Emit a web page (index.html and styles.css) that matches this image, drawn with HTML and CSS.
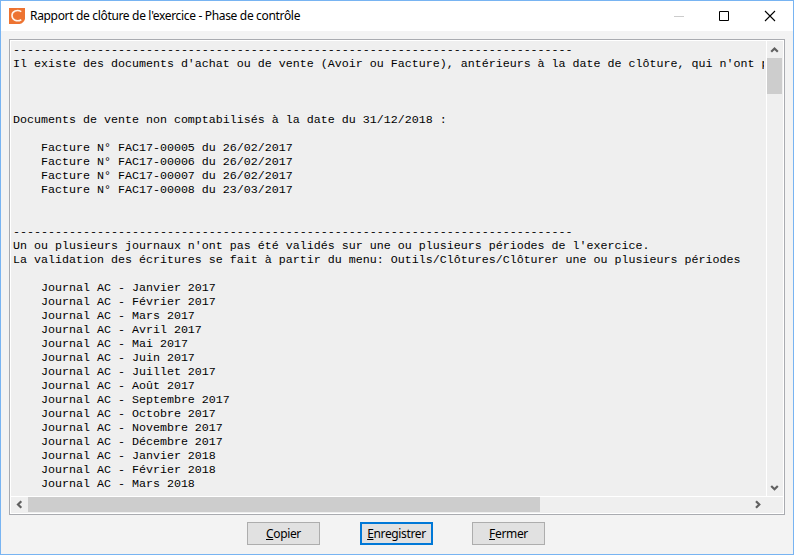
FILE: index.html
```html
<!DOCTYPE html>
<html lang="fr">
<head>
<meta charset="utf-8">
<title>Rapport de clôture de l'exercice - Phase de contrôle</title>
<link rel="stylesheet" href="styles.css">
</head>
<body>
<div class="window">
  <header class="titlebar">
    <svg class="app-icon" width="16" height="16" viewBox="0 0 16 16"><path d="M0 0H16V11Q15.5 13 14 14.2Q12.500 16 10.500 16H0Z" fill="#ed7331"/><path d="M12.300 3.600C8 1.100 3 3.200 3 7.500C3 12 8 14.200 12.300 11.700" fill="none" stroke="#fff3e9" stroke-width="1.600"/></svg>
    <h1 class="title">Rapport de clôture de l'exercice - Phase de contrôle</h1>
    <div class="controls">
      <svg width="46" height="29" viewBox="0 0 46 29"><path d="M18 14.5H28" stroke="#ccc"/></svg>
      <svg width="46" height="29" viewBox="0 0 46 29"><path d="M17.5 9.5H26.5V18.5H17.5Z" fill="none" stroke="#000"/></svg>
      <svg width="46" height="29" viewBox="0 0 46 29"><path d="M17 9L27 19M27 9L17 19" stroke="#000" stroke-width="1.1"/></svg>
    </div>
  </header>
  <main class="report">
    <pre class="text">--------------------------------------------------------------------------------
Il existe des documents d'achat ou de vente (Avoir ou Facture), antérieurs à la date de clôture, qui n'ont p



Documents de vente non comptabilisés à la date du 31/12/2018 :

    Facture N° FAC17-00005 du 26/02/2017
    Facture N° FAC17-00006 du 26/02/2017
    Facture N° FAC17-00007 du 26/02/2017
    Facture N° FAC17-00008 du 23/03/2017


--------------------------------------------------------------------------------
Un ou plusieurs journaux n'ont pas été validés sur une ou plusieurs périodes de l'exercice.
La validation des écritures se fait à partir du menu: Outils/Clôtures/Clôturer une ou plusieurs périodes

    Journal AC - Janvier 2017
    Journal AC - Février 2017
    Journal AC - Mars 2017
    Journal AC - Avril 2017
    Journal AC - Mai 2017
    Journal AC - Juin 2017
    Journal AC - Juillet 2017
    Journal AC - Août 2017
    Journal AC - Septembre 2017
    Journal AC - Octobre 2017
    Journal AC - Novembre 2017
    Journal AC - Décembre 2017
    Journal AC - Janvier 2018
    Journal AC - Février 2018
    Journal AC - Mars 2018</pre>
    <div class="vscroll">
      <svg width="15" height="17" viewBox="0 0 15 17"><path d="M4.2 10.8L7.5 7.5L10.8 10.8" class="arrow"/></svg>
      <div class="vthumb"></div>
      <svg class="last" width="15" height="17" viewBox="0 0 15 17"><path d="M4.2 7L7.5 10.300L10.8 7" class="arrow"/></svg>
    </div>
    <div class="hscroll">
      <svg width="17" height="15" viewBox="0 0 17 15"><path d="M10.3 4.2L7 7.5L10.3 10.8" class="arrow"/></svg>
      <div class="hthumb"></div>
      <svg class="last" width="17" height="15" viewBox="0 0 17 15"><path d="M7 4.2L10.300 7.5L7 10.8" class="arrow"/></svg>
    </div>
  </main>
  <footer class="actions">
    <button class="btn"><span><u>C</u>opier</span></button>
    <button class="btn primary"><span><u>E</u>nregistrer</span></button>
    <button class="btn"><span><u>F</u>ermer</span></button>
  </footer>
</div>
</body>
</html>
```
FILE: styles.css
```css
* { box-sizing: border-box; }
body { margin: 0; overflow: hidden; }
.window {
  width: 794px;
  height: 555px;
  border: 1px solid #78b4f2;
  background: #f3f3f3;
  display: flex;
  flex-direction: column;
  font-family: "Noto Sans", "Open Sans", sans-serif;
  font-size: 12px;
  color: #000;
}
.titlebar {
  height: 30px;
  background: #fff;
  display: flex;
  align-items: center;
  padding-left: 8px;
}
.app-icon { margin-right: 5px; }
.title {
  margin: 0;
  font-size: 12px;
  font-weight: 400;
  line-height: 16px;
  letter-spacing: -0.33px;
  white-space: nowrap;
}
.controls { margin-left: auto; margin-right: -1px; display: flex; }
.report {
  margin: 8px 8px 0;
  height: 476px;
  border: 1px solid #a9abb0;
  padding: 1px;
  background: #fff;
  display: grid;
  grid-template-columns: 755px 16px;
  grid-template-rows: 455px 16px;
  gap: 1px;
}
.text {
  margin: 0;
  padding: 2px 0 0 2px;
  border-right: 2px solid #efefef;
  background: #efefef;
  overflow: hidden;
  font: 11.67px/14px "Liberation Mono", monospace;
  white-space: pre;
}
.vscroll {
  background: #efefef;
  display: flex;
  flex-direction: column;
}
.vthumb { width: 15px; height: 36px; background: #cdcdcd; }
.hscroll {
  grid-column: 1 / 3;
  background: #efefef;
  display: flex;
}
.hthumb { width: 512px; height: 15px; background: #cdcdcd; }
.vscroll .last { margin-top: auto; }
.hscroll .last { margin-left: auto; margin-right: 17px; }
.arrow { fill: none; stroke: #606060; stroke-width: 2.2; }
.actions {
  display: flex;
  padding: 7px 0 0 246px;
}
.btn {
  width: 73px;
  height: 23px;
  padding: 0;
  border: 1px solid #adadad;
  border-radius: 0;
  background: #e1e1e1;
  color: #000;
  font: 12px/16px "Noto Sans", "Open Sans", sans-serif;
  letter-spacing: -0.35px;
}
.primary {
  margin: 0 39px 0 40px;
  border: 2px solid #0078d7;
}
```
